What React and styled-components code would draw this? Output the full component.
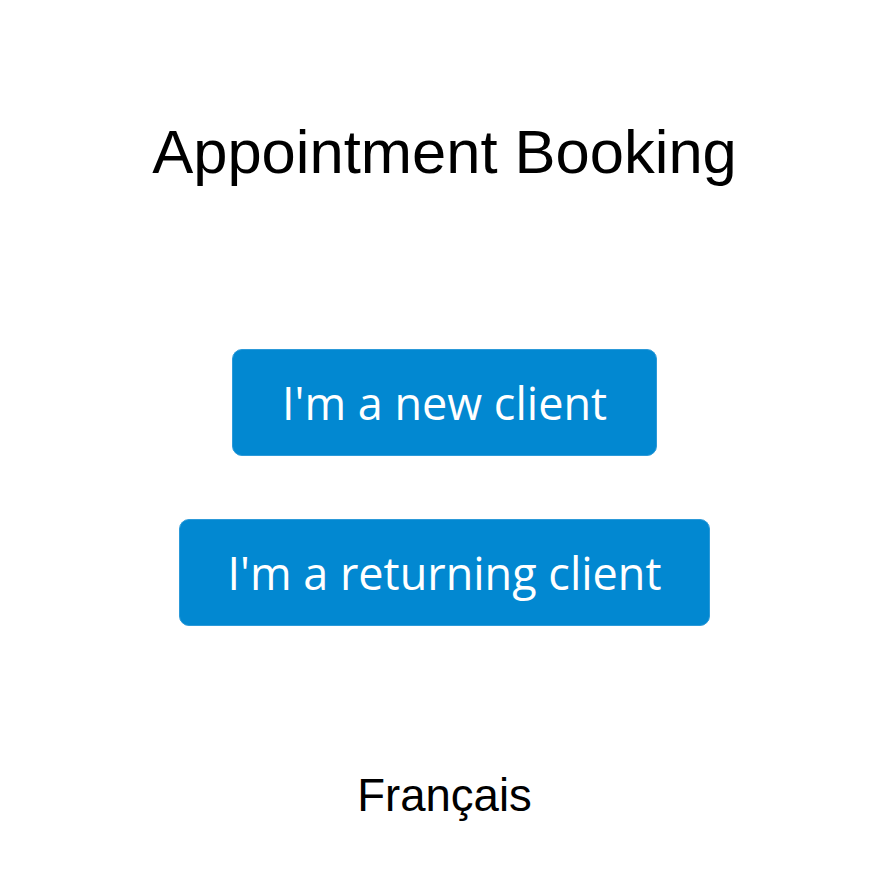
import React from "react";
import styled, { createGlobalStyle } from "styled-components";

const Global = createGlobalStyle`
  html, body { margin: 0; padding: 0; background: #ffffff; }
  body { font-family: "Liberation Sans", Arial, sans-serif; }
`;

const Page = styled.main`
  display: flex;
  flex-direction: column;
  align-items: center;
  padding-top: 118px;
  padding-left: 6px;
  min-height: 883px;
  box-sizing: border-box;
`;

const Title = styled.h1`
  margin: 0;
  font-family: "Liberation Sans", Arial, sans-serif;
  font-weight: 400;
  font-size: 61.5px;
  line-height: 68px;
  color: #000000;
`;

const Actions = styled.div`
  display: flex;
  flex-direction: column;
  align-items: center;
  gap: 63px;
  margin-top: 163px;
`;

const Button = styled.button`
  height: 107px;
  padding: 0 ${(p) => p.$pad}px;
  box-sizing: border-box;
  border: 1px solid #2c9ad9;
  border-radius: 10px;
  background: #0288d1;
  color: #ffffff;
  font-family: "Open Sans", sans-serif;
  font-size: 45px;
  font-weight: 400;
  cursor: pointer;
`;

const LangLink = styled.a`
  margin-top: 144px;
  font-family: "Liberation Sans", Arial, sans-serif;
  font-size: 45.5px;
  line-height: 52px;
  color: #000000;
  text-decoration: none;
`;

export default function App() {
  return (
    <>
      <Global />
      <Page>
        <Title>Appointment Booking</Title>
        <Actions>
          <Button $pad={49}>I'm a new client</Button>
          <Button $pad={47.5}>I'm a returning client</Button>
        </Actions>
        <LangLink href="#">Français</LangLink>
      </Page>
    </>
  );
}
